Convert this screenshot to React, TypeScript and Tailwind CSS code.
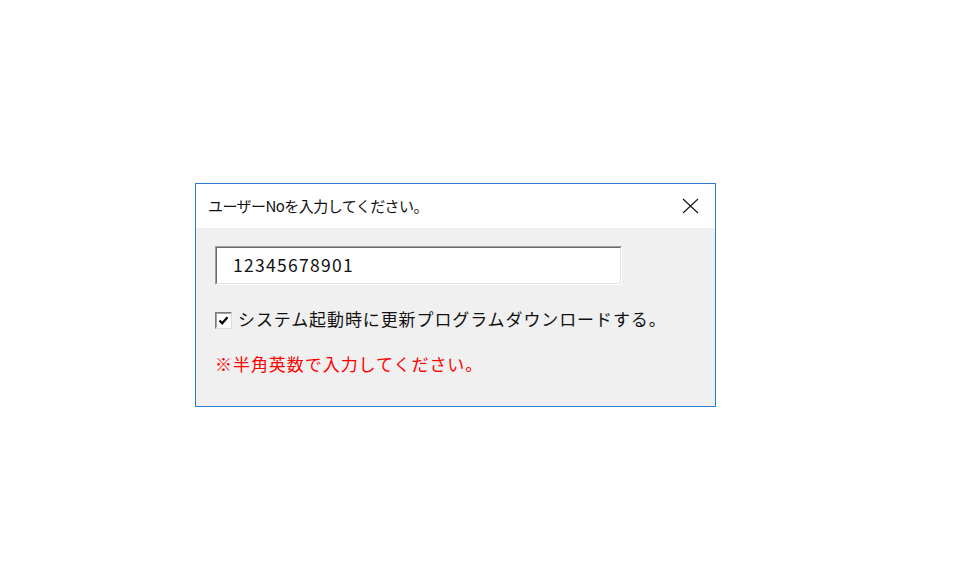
import React from "react";

// Windows-style "enter user number" dialog
const JP = "font-['Noto_Sans_CJK_JP','Noto_Sans',sans-serif]";

function CloseIcon() {
  return (
    <svg width="17" height="16" viewBox="0 0 17 16" className="block">
      <path d="M1 1 L16 15 M16 1 L1 15" stroke="#111" strokeWidth="1.1" fill="none" />
    </svg>
  );
}

function Checkbox({ checked }: { checked: boolean }) {
  return (
    <div className="h-[17px] w-[17px] border border-t-[#7a7a7a] border-l-[#7a7a7a] border-r-[#dcdcdc] border-b-[#dcdcdc] bg-white">
      <div className="flex h-full w-full items-center justify-center border border-t-[#a0a0a0] border-l-[#a0a0a0] border-r-white border-b-white">
        {checked && (
          <svg width="11" height="11" viewBox="0 0 11 11">
            <path d="M1.5 5.5 L4.2 8.3 L9.5 2.2" stroke="#000" strokeWidth="2.2" fill="none" />
          </svg>
        )}
      </div>
    </div>
  );
}

export default function App() {
  return (
    <div className={`min-h-[567px] w-[955px] bg-white pt-[183px] ${JP}`}>
      <div className="ml-[195px] flex h-[224px] w-[521px] flex-col border border-[#2b7bd0] bg-white">
        <div className="flex h-[44px] shrink-0 items-center justify-between pl-[12px] pr-[16px]">
          <span className="text-[15px] tracking-[-0.55px] text-[#111]">ユーザーNoを入力してください。</span>
          <CloseIcon />
        </div>
        <div className="flex flex-1 flex-col bg-[#f0f0f0] pl-[19px]">
          <div className="mt-[18px] h-[39px] w-[407px] border border-t-[#a0a0a0] border-l-[#a0a0a0] border-r-white border-b-white">
            <div className="flex h-full items-center border border-t-[#696969] border-l-[#696969] border-r-[#e3e3e3] border-b-[#e3e3e3] bg-white pl-[16px]">
              <span className="text-[17.5px] tracking-[1.3px] text-[#111]">12345678901</span>
            </div>
          </div>
          <div className="mt-[26px] flex h-[19px] items-center">
            <Checkbox checked />
            <span className="-mt-[3px] ml-[6px] text-[17px] tracking-[0.9px] text-[#111]">
              システム起動時に更新プログラムダウンロードする。
            </span>
          </div>
          <div className="mt-[26px] flex h-[19px] items-center">
            <span className="-mt-[3px] text-[17px] tracking-[0.95px] text-[#ff0000]">※半角英数で入力してください。</span>
          </div>
        </div>
      </div>
    </div>
  );
}
